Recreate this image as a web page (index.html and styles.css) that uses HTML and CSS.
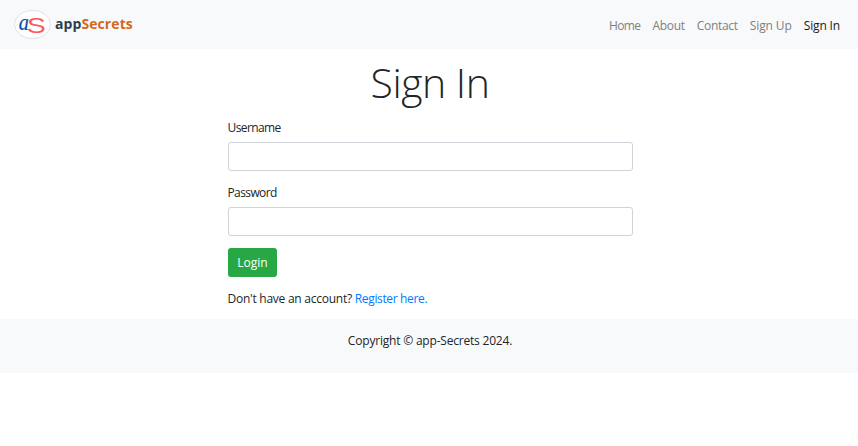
FILE: index.html
```html
<!DOCTYPE html>
<html lang="en">
<head>
<meta charset="utf-8">
<title>appSecrets - Sign In</title>
<link rel="stylesheet" href="styles.css">
</head>
<body>
<nav class="navbar">
  <a class="brand" href="#">
    <svg class="logo" width="38" height="30" viewBox="0 0 38 30" aria-hidden="true">
      <ellipse cx="18.5" cy="14.5" rx="18" ry="14" fill="#fff" stroke="#dee2e6"/>
      <text class="logo-a" transform="translate(4.8 19.5) scale(.88 1)">a</text>
      <text class="logo-s" transform="translate(12.7 22.8) scale(1.3 1)">S</text>
    </svg>
    <span class="brand-name">app<span class="brand-accent">Secrets</span></span>
  </a>
  <div class="nav-links">
    <a class="nav-link home" href="#">Home</a>
    <a class="nav-link about" href="#">About</a>
    <a class="nav-link contact" href="#">Contact</a>
    <a class="nav-link signup" href="#">Sign Up</a>
    <a class="nav-link signin active" href="#">Sign In</a>
  </div>
</nav>
<main class="content">
  <h1 class="title">Sign In</h1>
  <form class="form">
    <label class="label" for="username">Username</label>
    <input class="input" id="username" type="text">
    <label class="label" for="password">Password</label>
    <input class="input last" id="password" type="password">
    <button class="login" type="button">Login</button>
    <p class="register"><span class="question">Don't have an account?</span> <a href="#">Register here.</a></p>
  </form>
</main>
<footer class="footer"><span>Copyright © app-Secrets 2024.</span></footer>
</body>
</html>
```
FILE: styles.css
```css
* { box-sizing: border-box; }
body {
  margin: 0;
  background: #fff;
  color: #212529;
  font: 12px/18px "Open Sans", "Noto Sans", sans-serif;
}
a { text-decoration: none; }
.navbar {
  display: flex;
  align-items: center;
  justify-content: space-between;
  height: 49px;
  padding: 0 18px 0 14px;
  background: #f8f9fa;
}
.brand { display: flex; align-items: center; gap: 3px; }
.logo { display: block; }
.logo-a { font: italic 23px "Liberation Serif", serif; fill: #0b4ba0; stroke: #0b4ba0; stroke-width: 0.2px; }
.logo-s { font: 22px "Liberation Sans", sans-serif; fill: #ff5a5f; }
.brand-name { font-size: 14px; line-height: 18px; padding-bottom: 1px; font-weight: 700; color: #2c3e50; letter-spacing: 0.08px; }
.brand-accent { color: #d2691e; }
.nav-links { display: flex; gap: 12px; padding-top: 3px; }
.nav-link { color: #7f8080; white-space: nowrap; }
.home { letter-spacing: -0.6px; }
.about { letter-spacing: -0.3px; }
.contact { letter-spacing: -0.3px; }
.signup { letter-spacing: -0.1px; }
.signin { letter-spacing: -0.15px; }
.nav-link.active { color: #191919; }
.title {
  margin: 0;
  padding-top: 8px;
  height: 70px;
  font-size: 41px;
  line-height: 51px;
  font-weight: 300;
  letter-spacing: -0.5px;
  text-align: center;
  padding-left: 2px;
}
.form { display: flex; flex-direction: column; align-items: flex-start; width: 405px; margin: 0 auto; position: relative; left: 1px; }
.label { height: 23px; letter-spacing: -0.6px; }
.input {
  width: 405px;
  height: 29px;
  margin: 0 0 13px;
  border: 1px solid #ced4da;
  border-radius: 3px;
  background: #fff;
}
.input.last { margin-bottom: 12px; }
.login {
  width: 49px;
  height: 29px;
  padding: 0 0 0 1px;
  border: 0;
  border-radius: 3px;
  background: #28a745;
  color: #fff;
  font: inherit;
}
.register { margin: 13px 0 0; height: 29px; white-space: nowrap; letter-spacing: -0.25px; }
.register a { color: #007bff; letter-spacing: -0.35px; }
.footer { height: 54px; padding: 13px 0 0 2px; background: #f8f9fa; text-align: center; letter-spacing: -0.2px; }
```
